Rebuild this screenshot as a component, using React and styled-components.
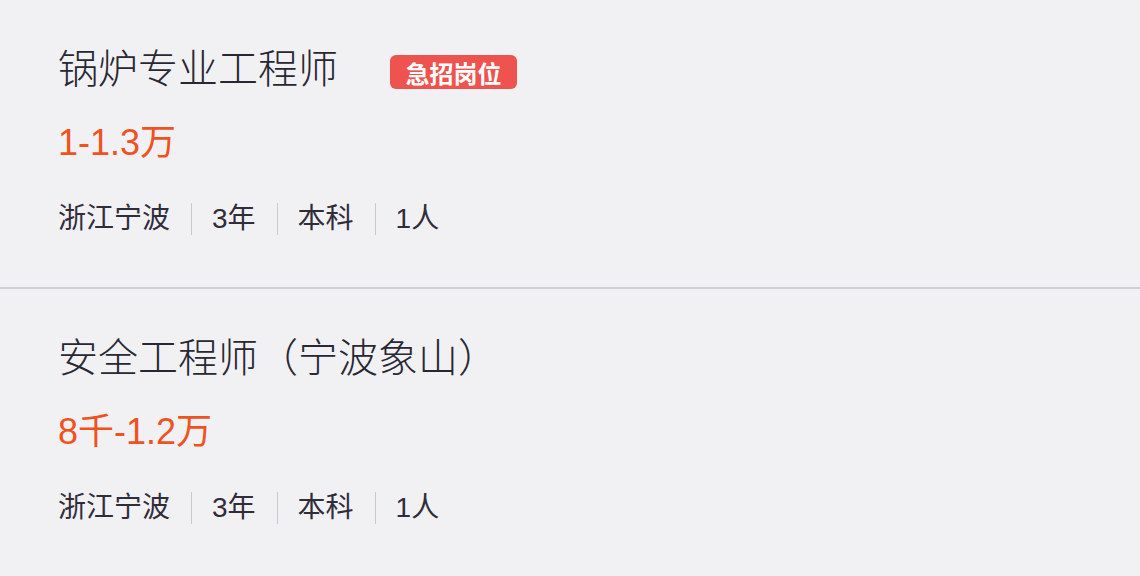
import React from "react"
import styled, { createGlobalStyle } from "styled-components"

const GlobalStyle = createGlobalStyle`
	html, body {
		margin: 0;
		padding: 0;
		background: #f1f1f4;
	}
	body {
		font-family: "Liberation Sans", "Noto Sans CJK SC", sans-serif;
	}
`

const List = styled.div`
	width: 1140px;
	height: 576px;
	background: #f1f1f4;
	overflow: hidden;
`

const Card = styled.div`
	padding: 45px 0 52px 58px;
	border-bottom: ${props => (props.last ? "none" : "2px solid #c9d0d8")};
`

const TitleRow = styled.div`
	display: flex;
	align-items: center;
	height: 48px;
`

const Title = styled.h3`
	margin: 0;
	font-size: 40px;
	font-weight: 300;
	line-height: 48px;
	color: #282732;
	white-space: nowrap;
`

const Badge = styled.span`
	margin: 6px 0 0 52px;
	display: inline-flex;
	align-items: center;
	justify-content: center;
	width: 127px;
	height: 34px;
	border-radius: 6px;
	background: #ef5350;
	color: #fff;
	font-size: 24px;
	font-weight: 700;
`

const Salary = styled.div`
	margin-top: 30px;
	font-size: 36px;
	line-height: 40px;
	color: #f0521f;
`

const Meta = styled.ul`
	display: flex;
	align-items: center;
	list-style: none;
	margin: 40px 0 0;
	padding: 0;
	height: 32px;
`

const MetaItem = styled.li`
	font-size: 28px;
	line-height: 32px;
	color: #302c3a;
	padding: 0 21px 0 20px;
	border-left: 1px solid #c6cad3;

	&:first-child {
		padding-left: 0;
		border-left: none;
	}
`

const jobs = [
	{ title: "锅炉专业工程师", urgent: true, salary: "1-1.3万", meta: ["浙江宁波", "3年", "本科", "1人"] },
	{ title: "安全工程师（宁波象山）", urgent: false, salary: "8千-1.2万", meta: ["浙江宁波", "3年", "本科", "1人"] }
]

export default function App() {
	return (
		<List>
			<GlobalStyle />
			{jobs.map((job, i) => (
				<Card key={job.title} last={i === jobs.length - 1}>
					<TitleRow>
						<Title>{job.title}</Title>
						{job.urgent && <Badge>急招岗位</Badge>}
					</TitleRow>
					<Salary>{job.salary}</Salary>
					<Meta>
						{job.meta.map(m => (
							<MetaItem key={m}>{m}</MetaItem>
						))}
					</Meta>
				</Card>
			))}
		</List>
	)
}
